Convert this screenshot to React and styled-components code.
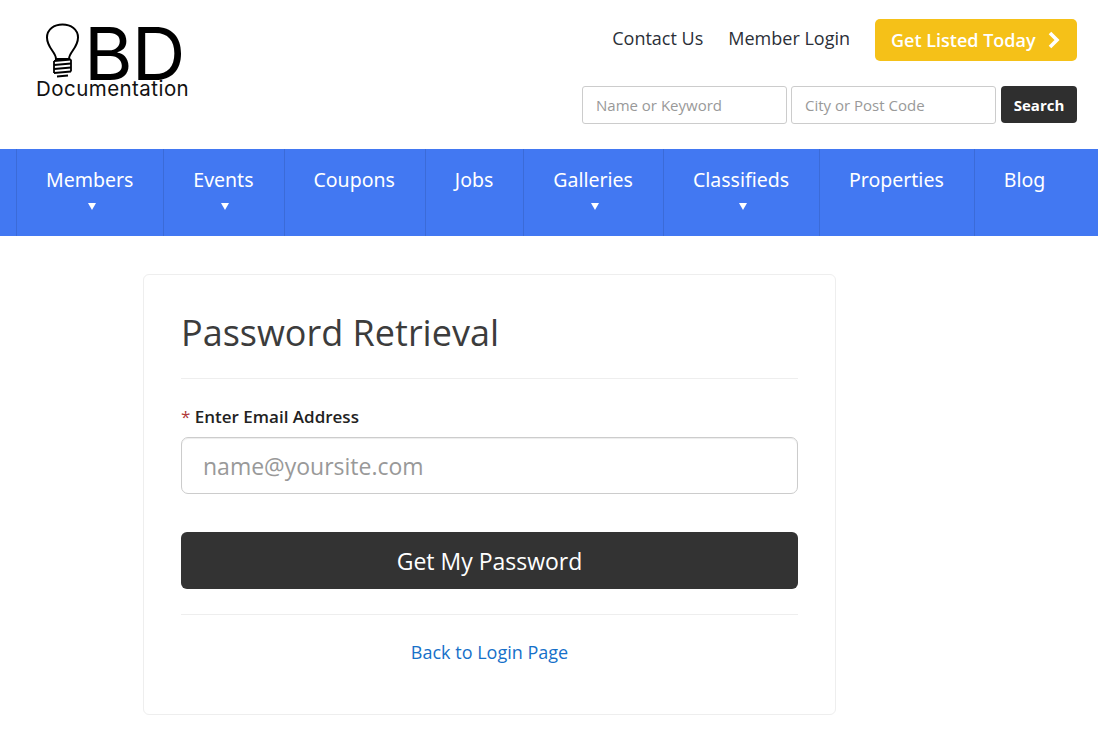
import React from 'react';
import styled, { createGlobalStyle } from 'styled-components';

const GlobalStyle = createGlobalStyle`
  html, body { margin: 0; padding: 0; background: #fff; }
  body { font-family: "Open Sans", "Liberation Sans", sans-serif; color: #333; }
  * { box-sizing: border-box; }
  input::placeholder { color: #999; opacity: 1; }
`;

const Header = styled.header`
  height: 149px;
  display: flex;
  justify-content: space-between;
  padding: 19px 21px 0 36px;
`;

const Logo = styled.div`
  width: 170px;
  display: flex;
  flex-direction: column;
`;

const LogoTop = styled.div`
  display: flex;
  align-items: flex-start;
  height: 62px;
  padding: 4px 0 0 9px;
`;

const LogoLetters = styled.span`
  font-family: Inter, "Liberation Sans", sans-serif;
  font-size: 73px;
  line-height: 62px;
  letter-spacing: -1px;
  color: #000;
  margin-left: 3px;
  font-weight: 400;
  transform: scaleX(1.02);
  transform-origin: left;
`;

const LogoCaption = styled.span`
  font-family: Inter, "Liberation Sans", sans-serif;
  font-size: 20.5px;
  line-height: 24px;
  letter-spacing: 0.45px;
  color: #111;
  margin-top: -4px;
`;

const HeaderRight = styled.div`
  display: flex;
  flex-direction: column;
  align-items: flex-end;
  gap: 25px;
`;

const TopLinks = styled.div`
  display: flex;
  align-items: center;
  height: 42px;
`;

const TopLink = styled.a`
  font-size: 18px;
  color: #2b2f38;
  margin-right: 25px;
  position: relative;
  top: -2px;
`;

const ListedButton = styled.a`
  width: 202px;
  height: 42px;
  background: #f5c118;
  border-radius: 5px;
  color: #fff;
  font-size: 18px;
  font-weight: 600;
  display: flex;
  align-items: center;
  justify-content: space-between;
  padding: 0 16px;
`;

const SearchForm = styled.form`
  display: flex;
  gap: 4px;
  margin: 0;
`;

const SearchInput = styled.input`
  width: 205px;
  height: 38px;
  border: 1px solid #ccc;
  border-radius: 3px;
  padding: 0 13px;
  font: 15px "Open Sans", sans-serif;
  background: #fff;
`;

const SearchButton = styled.button`
  width: 76px;
  height: 37px;
  margin-left: 1px;
  border: 0;
  border-radius: 4px;
  background: #2f2f2f;
  color: #fff;
  font: 700 15px "Open Sans", sans-serif;
`;

const Nav = styled.nav`
  height: 87px;
  background: #4278f2;
  display: flex;
  padding-left: 16px;
`;

const NavItem = styled.a`
  display: flex;
  flex-direction: column;
  align-items: center;
  padding: 17px 30px 0 29px;
  border-left: 1px solid #3b6bd8;
  color: #fff;
  font-family: "Noto Sans", sans-serif;
  font-size: 19.5px;
  line-height: 28px;
`;

const Caret = styled.span`
  width: 0;
  height: 0;
  margin-top: 9px;
  border-left: 4px solid transparent;
  border-right: 4px solid transparent;
  border-top: 7px solid #fff;
  position: relative;
  left: 2px;
`;

const Main = styled.main`
  padding: 38px 0 18px 143px;
`;

const Card = styled.section`
  width: 693px;
  height: 441px;
  border: 1px solid #eee;
  border-radius: 6px;
  padding: 0 37px;
`;

const Title = styled.h1`
  margin: 0;
  height: 104px;
  padding-top: 31px;
  border-bottom: 1px solid #eee;
  font-size: 36px;
  line-height: 54px;
  font-weight: 400;
  color: #3c3c3c;
`;

const Label = styled.label`
  display: block;
  margin-top: 26px;
  font-size: 17px;
  line-height: 24px;
  font-weight: 600;
  color: #222;
`;

const Star = styled.span`
  color: #b03a3a;
  font-weight: 400;
`;

const EmailInput = styled.input`
  display: block;
  width: 100%;
  height: 57px;
  margin-top: 8px;
  padding: 0 21px;
  border: 1px solid #ccc;
  border-radius: 7px;
  font: 23px "Open Sans", sans-serif;
  box-shadow: inset 0 1px 1px rgba(0, 0, 0, 0.075);
`;

const SubmitButton = styled.button`
  display: block;
  width: 100%;
  height: 57px;
  margin-top: 38px;
  border: 0;
  border-radius: 6px;
  background: #333;
  color: #fff;
  font: 23px "Open Sans", sans-serif;
`;

const Divider = styled.hr`
  border: 0;
  border-top: 1px solid #eee;
  margin: 25px 0 0;
`;

const BackLink = styled.a`
  display: block;
  margin-top: 24px;
  text-align: center;
  font-size: 18px;
  line-height: 26px;
  color: #1670c9;
`;

const BulbIcon = () => (
  <svg width="36" height="56" viewBox="0 0 36 56" fill="none" stroke="#000">
    <path strokeWidth="2" d="M11 36 C11 29 2 25 2 14.5 C2 6.5 9 1.5 17.5 1.5 C26 1.5 33 6.5 33 14.5 C33 25 24 29 24 36 Z" />
    <path strokeWidth="1.8" d="M9 38 L26 36.5 M9 42 L26 40.5 M9 46 L26 44.5 M9 50 L26 48.5 M12 53.5 L23 52.5" />
    <path strokeWidth="1.8" d="M9 38 V50 M26 36.5 V48.5" />
  </svg>
);

const navItems = [
  { label: 'Members', caret: true },
  { label: 'Events', caret: true },
  { label: 'Coupons' },
  { label: 'Jobs' },
  { label: 'Galleries', caret: true },
  { label: 'Classifieds', caret: true },
  { label: 'Properties' },
  { label: 'Blog' },
];

const App = () => (
  <>
    <GlobalStyle />
    <Header>
      <Logo>
        <LogoTop>
          <BulbIcon />
          <LogoLetters>BD</LogoLetters>
        </LogoTop>
        <LogoCaption>Documentation</LogoCaption>
      </Logo>
      <HeaderRight>
        <TopLinks>
          <TopLink>Contact Us</TopLink>
          <TopLink>Member Login</TopLink>
          <ListedButton>
            Get Listed Today
            <svg width="14" height="18" viewBox="0 0 14 18" fill="none" stroke="#fff" strokeWidth="3.6">
              <path d="M3 2 L10 9 L3 16" />
            </svg>
          </ListedButton>
        </TopLinks>
        <SearchForm>
          <SearchInput placeholder="Name or Keyword" />
          <SearchInput placeholder="City or Post Code" />
          <SearchButton type="button">Search</SearchButton>
        </SearchForm>
      </HeaderRight>
    </Header>
    <Nav>
      {navItems.map((item) => (
        <NavItem key={item.label}>
          {item.label}
          {item.caret && <Caret />}
        </NavItem>
      ))}
    </Nav>
    <Main>
      <Card>
        <Title>Password Retrieval</Title>
        <Label><Star>*</Star> Enter Email Address</Label>
        <EmailInput placeholder="name@yoursite.com" />
        <SubmitButton type="button">Get My Password</SubmitButton>
        <Divider />
        <BackLink>Back to Login Page</BackLink>
      </Card>
    </Main>
  </>
);

export default App;
